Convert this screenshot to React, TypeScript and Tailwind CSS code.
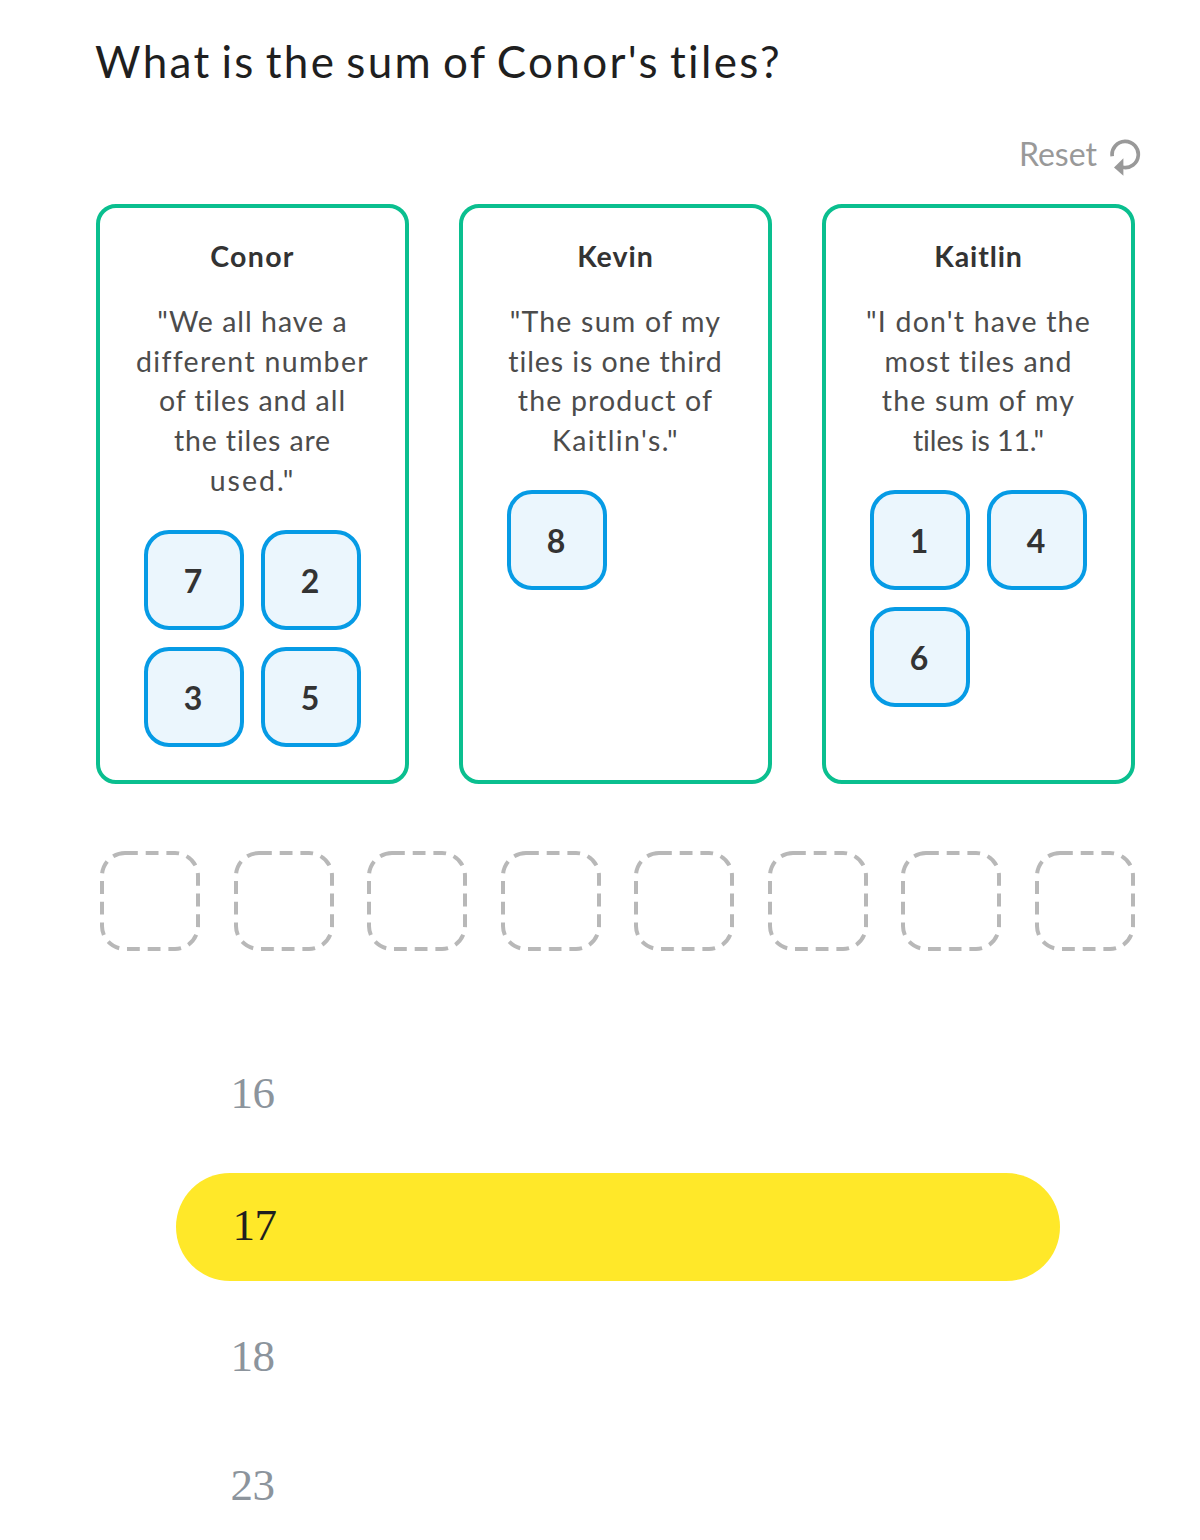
type Line = { text: string; tracking: string };
type Player = { name: string; nameTracking: string; lines: Line[]; tiles: number[] };

const players: Player[] = [
  {
    name: "Conor",
    nameTracking: "tracking-[1.3px]",
    lines: [
      { text: '"We all have a', tracking: "tracking-[1px]" },
      { text: "different number", tracking: "tracking-[1.3px]" },
      { text: "of tiles and all", tracking: "tracking-[0.95px]" },
      { text: "the tiles are", tracking: "tracking-[0.85px]" },
      { text: 'used."', tracking: "tracking-[2px]" },
    ],
    tiles: [7, 2, 3, 5],
  },
  {
    name: "Kevin",
    nameTracking: "tracking-[1px]",
    lines: [
      { text: '"The sum of my', tracking: "tracking-[1.2px]" },
      { text: "tiles is one third", tracking: "tracking-[0.9px]" },
      { text: "the product of", tracking: "tracking-[1.15px]" },
      { text: 'Kaitlin\'s."', tracking: "tracking-[1.4px]" },
    ],
    tiles: [8],
  },
  {
    name: "Kaitlin",
    nameTracking: "tracking-[0.9px]",
    lines: [
      { text: '"I don\'t have the', tracking: "tracking-[1.2px]" },
      { text: "most tiles and", tracking: "tracking-[1px]" },
      { text: "the sum of my", tracking: "tracking-[1.2px]" },
      { text: 'tiles is 11."', tracking: "tracking-[-0.1px]" },
    ],
    tiles: [1, 4, 6],
  },
];

function ResetIcon() {
  return (
    <svg className="h-[38px] w-[31px]" viewBox="0 0 31 38" fill="none">
      <path d="M2.2 17.2A13.1 13.1 0 1 1 12.6 28.3" stroke="#999" strokeWidth="3.7" />
      <path d="M4 28.4L13.4 19.2V36.8Z" fill="#999" />
    </svg>
  );
}

function Tile({ value }: { value: number }) {
  return (
    <div className="flex size-[100px] items-center justify-center rounded-[25px] border-4 border-[#069be5] bg-[#ebf6fd] pt-0.5 pr-0.5 text-[32px] font-bold text-[#333]">
      {value}
    </div>
  );
}

function Card({ player }: { player: Player }) {
  return (
    <section className="flex h-[580px] w-[313px] flex-col items-center rounded-[20px] border-4 border-[#0abf8f] pt-7 text-[28.5px]">
      <h2 className={`h-10 leading-10 font-bold text-[#333] ${player.nameTracking}`}>{player.name}</h2>
      <div className="mt-[26px] text-center leading-[39.7px] whitespace-nowrap text-[#4c4c4c]">
        {player.lines.map((l) => (
          <p key={l.text} className={l.tracking}>
            {l.text}
          </p>
        ))}
      </div>
      <div className="mt-[29.5px] grid grid-cols-2 gap-[17px]">
        {player.tiles.map((t) => (
          <Tile key={t} value={t} />
        ))}
        {player.tiles.length === 1 && <div className="size-[100px]" />}
      </div>
    </section>
  );
}

function Slot() {
  return (
    <svg className="size-[100px]" viewBox="0 0 100 100" fill="none">
      <rect x="2" y="2" width="96" height="96" rx="23" stroke="#b8b8b8" strokeWidth="4" strokeDasharray="12.8 7.9" />
    </svg>
  );
}

const option = "flex items-center text-[45px] tracking-[-0.5px] font-['Liberation_Serif',serif]";

export default function App() {
  return (
    <main className="h-[1540px] w-[1200px] overflow-hidden bg-white pt-[31px] pr-[65px] pl-24 font-['Lato',sans-serif]">
      <h1 className="-ml-px h-[60px] text-[44px] leading-[60px] tracking-[2.3px] [word-spacing:-3.5px] whitespace-nowrap text-[#1f1f1f]">
        What is the sum of Conor's tiles?
      </h1>
      <div className="mt-[42px] -mr-[6px] flex h-10 justify-end gap-[13px] text-[32px] leading-[42px] text-[#999]">
        <span>Reset</span>
        <span className="pt-[6px]">
          <ResetIcon />
        </span>
      </div>
      <div className="mt-[31px] flex justify-between">
        {players.map((p) => (
          <Card key={p.name} player={p} />
        ))}
      </div>
      <div className="mt-[67px] flex justify-between pl-1">
        {Array.from({ length: 8 }, (_, i) => (
          <Slot key={i} />
        ))}
      </div>
      <div className="mt-[88px] ml-[79.5px] w-[884.5px] text-[#8c949c]">
        <div className={`h-[108px] pt-0.5 pl-[55px] ${option}`}>16</div>
        <div className={`mt-[25.5px] h-[108px] rounded-full bg-[#ffe829] pb-0.5 pl-[57px] text-[#1f1f1f] ${option}`}>17</div>
        <div className={`mt-[21px] h-[108px] pt-0.5 pl-[55px] ${option}`}>18</div>
        <div className={`mt-[21.5px] h-[108px] pt-0.5 pl-[55px] ${option}`}>23</div>
      </div>
    </main>
  );
}
